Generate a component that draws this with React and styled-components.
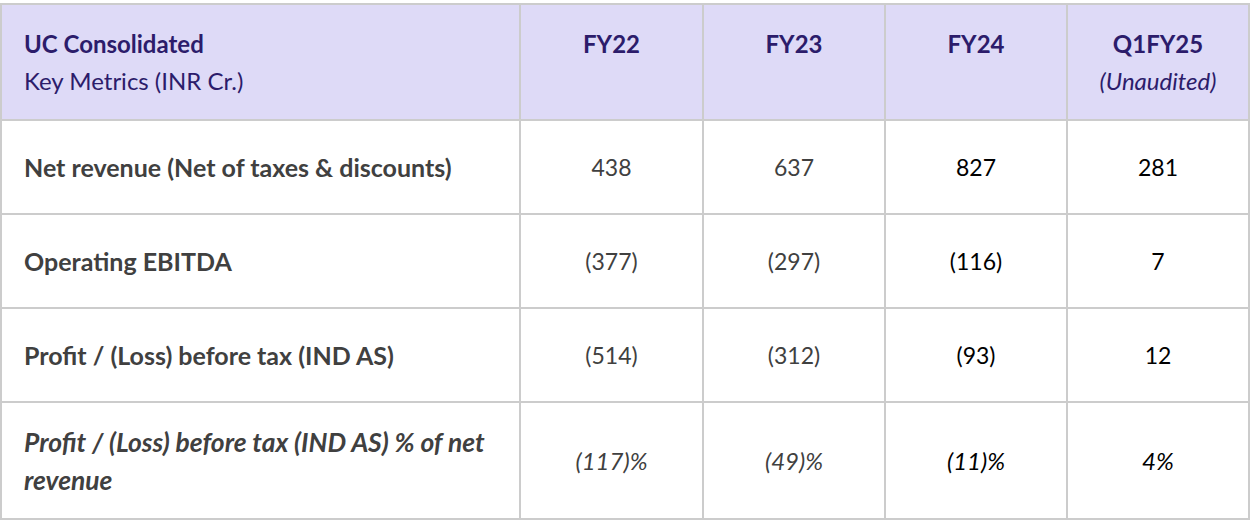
import React from "react";
import styled, { createGlobalStyle } from "styled-components";

const GlobalStyle = createGlobalStyle`
  html, body {
    margin: 0;
    padding: 0;
    background: #ffffff;
  }
  body {
    padding: 3px 0 0 0;
    font-family: Lato, "Open Sans", sans-serif;
  }
`;

const rows = [
  { label: "Net revenue (Net of taxes & discounts)", values: ["438", "637", "827", "281"] },
  { label: "Operating EBITDA", values: ["(377)", "(297)", "(116)", "7"] },
  { label: "Profit / (Loss) before tax (IND AS)", values: ["(514)", "(312)", "(93)", "12"] },
];

function App() {
  return (
    <>
      <GlobalStyle />
      <Table>
        <colgroup>
          <col style={{ width: 519 }} />
          <col style={{ width: 183 }} />
          <col style={{ width: 182 }} />
          <col style={{ width: 182 }} />
          <col style={{ width: 182 }} />
        </colgroup>
        <thead>
          <tr>
            <HeadCell>
              <strong>UC Consolidated</strong>
              <br />
              Key Metrics (INR Cr.)
            </HeadCell>
            <HeadCell $center>
              <strong>FY22</strong>
            </HeadCell>
            <HeadCell $center>
              <strong>FY23</strong>
            </HeadCell>
            <HeadCell $center>
              <strong>FY24</strong>
            </HeadCell>
            <HeadCell $center>
              <strong>Q1FY25</strong>
              <br />
              <em>(Unaudited)</em>
            </HeadCell>
          </tr>
        </thead>
        <tbody>
          {rows.map((row) => (
            <Row key={row.label}>
              <Label>{row.label}</Label>
              {row.values.map((v, i) => (
                <Value key={i} $dark={i > 1}>
                  {v}
                </Value>
              ))}
            </Row>
          ))}
          <Row $tall>
            <Label $italic>
              Profit / (Loss) before tax (IND AS) % of net
              <br />
              revenue
            </Label>
            <Value $italic>(117)%</Value>
            <Value $italic>(49)%</Value>
            <Value $italic $dark>(11)%</Value>
            <Value $italic $dark>4%</Value>
          </Row>
        </tbody>
      </Table>
    </>
  );
}

export default App;

const Table = styled.table`
  width: 1249px;
  table-layout: fixed;
  border-collapse: collapse;
  border: 2px solid #cccccc;
  font-size: 24px;
`;

const HeadCell = styled.th`
  background: #dedaf7;
  color: #2c1c6b;
  border: 2px solid #cccccc;
  height: 116px;
  box-sizing: border-box;
  padding: ${(p) => (p.$center ? "20px 4px 0 4px" : "20px 8px 0 22px")};
  vertical-align: top;
  text-align: ${(p) => (p.$center ? "center" : "left")};
  font-weight: 400;
  line-height: 37px;
  font-size: 24px;
  strong {
    font-weight: 700;
  }
  em {
    font-style: italic;
  }
`;

const Row = styled.tr`
  height: ${(p) => (p.$tall ? "117px" : "94px")};
`;

const Label = styled.td`
  border: 2px solid #cccccc;
  padding: 0 6px 0 22px;
  color: #404040;
  font-weight: 700;
  font-style: ${(p) => (p.$italic ? "italic" : "normal")};
  font-size: ${(p) => (p.$italic ? "26.4px" : "25px")};
  line-height: 38px;
  vertical-align: middle;
  white-space: nowrap;
`;

const Value = styled.td`
  border: 2px solid #cccccc;
  padding: 0 4px;
  text-align: center;
  vertical-align: middle;
  color: ${(p) => (p.$dark ? "#000000" : "#404040")};
  font-style: ${(p) => (p.$italic ? "italic" : "normal")};
  font-size: ${(p) => (p.$italic ? "24px" : "23px")};
`;
